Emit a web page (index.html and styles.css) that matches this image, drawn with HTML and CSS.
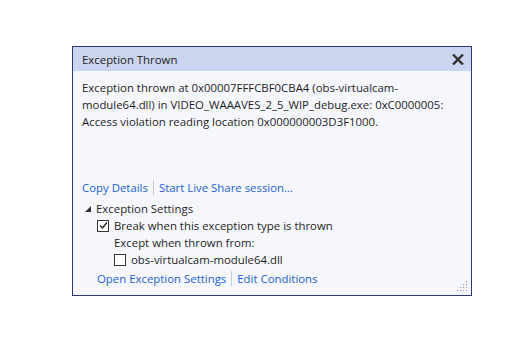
FILE: index.html
```html
<!DOCTYPE html>
<html lang="en">
<head>
  <meta charset="UTF-8">
  <title>Exception Thrown</title>
  <link rel="stylesheet" href="styles.css">
</head>
<body>
  <div class="dialog">
    <div class="title-bar">
      <span class="title">Exception Thrown</span>
      <svg class="close" width="12" height="11" viewBox="0 0 12 11">
        <path d="M1 0.5 L11 10.5 M11 0.5 L1 10.5" stroke="#333" stroke-width="2.4"/>
      </svg>
    </div>

    <div class="content">
      <p class="message">Exception thrown at 0x00007FFFCBF0CBA4 (obs-virtualcam-module64.dll) in VIDEO_WAAAVES_2_5_WIP_debug.exe: 0xC0000005: Access violation reading location 0x000000003D3F1000.</p>

      <div class="links">
        <a href="#">Copy Details</a>
        <span class="sep"></span>
        <a href="#">Start Live Share session...</a>
      </div>

      <div class="settings">
        <div class="settings-head"><span class="arrow"></span>Exception Settings</div>
        <div class="row indent-1">
          <span class="checkbox">
            <svg width="9" height="9" viewBox="0 0 9 9"><path d="M1 4.5 L3.5 7 L8 1.5" fill="none" stroke="#222" stroke-width="1.4"/></svg>
          </span>
          Break when this exception type is thrown
        </div>
        <div class="row indent-2">Except when thrown from:</div>
        <div class="row indent-2">
          <span class="checkbox"></span>
          obs-virtualcam-module64.dll
        </div>
        <div class="links indent-1">
          <a href="#">Open Exception Settings</a>
          <span class="sep"></span>
          <a href="#">Edit Conditions</a>
        </div>
      </div>
    </div>

    <svg class="grip" width="11" height="11" viewBox="0 0 11 11" fill="#8a94b8">
      <rect x="9" y="0" width="1" height="1"/>
      <rect x="6" y="3" width="1" height="1"/><rect x="9" y="3" width="1" height="1"/>
      <rect x="3" y="6" width="1" height="1"/><rect x="6" y="6" width="1" height="1"/><rect x="9" y="6" width="1" height="1"/>
      <rect x="0" y="9" width="1" height="1"/><rect x="3" y="9" width="1" height="1"/><rect x="6" y="9" width="1" height="1"/><rect x="9" y="9" width="1" height="1"/>
    </svg>
  </div>
</body>
</html>
```

FILE: styles.css
```css
body {
  margin: 0;
  padding: 0;
  background-color: #ffffff;
  font-family: "Open Sans", "Noto Sans", Arial, sans-serif;
  font-size: 11.4px;
  color: #1e1e1e;
}

.dialog {
  position: relative;
  box-sizing: border-box;
  width: 400px;
  height: 250px;
  margin: 46px 0 0 72px;
  border: 1px solid #2d3873;
  background-color: #f5f7fd;
  display: flex;
  flex-direction: column;
}

.title-bar {
  height: 24px;
  background-color: #ccd5ef;
  display: flex;
  align-items: center;
  justify-content: space-between;
  padding: 0 4px 0 9px;
}

.title {
  color: #1e1e1e;
}

.close {
  margin-right: 3px;
}

.content {
  flex: 1;
  display: flex;
  flex-direction: column;
  padding: 8px 10px 0 9px;
}

.message {
  margin: 0;
  line-height: 17px;
}

.links {
  margin-top: auto;
  display: flex;
  align-items: center;
  height: 18px;
}

.links a {
  color: #1c5fcf;
  text-decoration: none;
}

.sep {
  width: 1px;
  height: 15px;
  background-color: #c5cad6;
  margin: 0 5px;
}

.settings {
  margin-top: 4px;
  padding-bottom: 7px;
}

.settings-head {
  display: flex;
  align-items: center;
  height: 17px;
}

.arrow {
  width: 0;
  height: 0;
  border-left: 6px solid transparent;
  border-bottom: 6px solid #333333;
  margin: 0 5px 0 3px;
}

.row {
  display: flex;
  align-items: center;
  height: 17px;
}

.indent-1 {
  padding-left: 15px;
}

.indent-2 {
  padding-left: 32px;
}

.checkbox {
  box-sizing: border-box;
  width: 12px;
  height: 12px;
  border: 1px solid #333333;
  background-color: #ffffff;
  margin-right: 5px;
  display: flex;
  align-items: center;
  justify-content: center;
}

.settings .links {
  margin-top: 1px;
  height: 19px;
}

.grip {
  position: absolute;
  right: 3px;
  bottom: 3px;
}
```
